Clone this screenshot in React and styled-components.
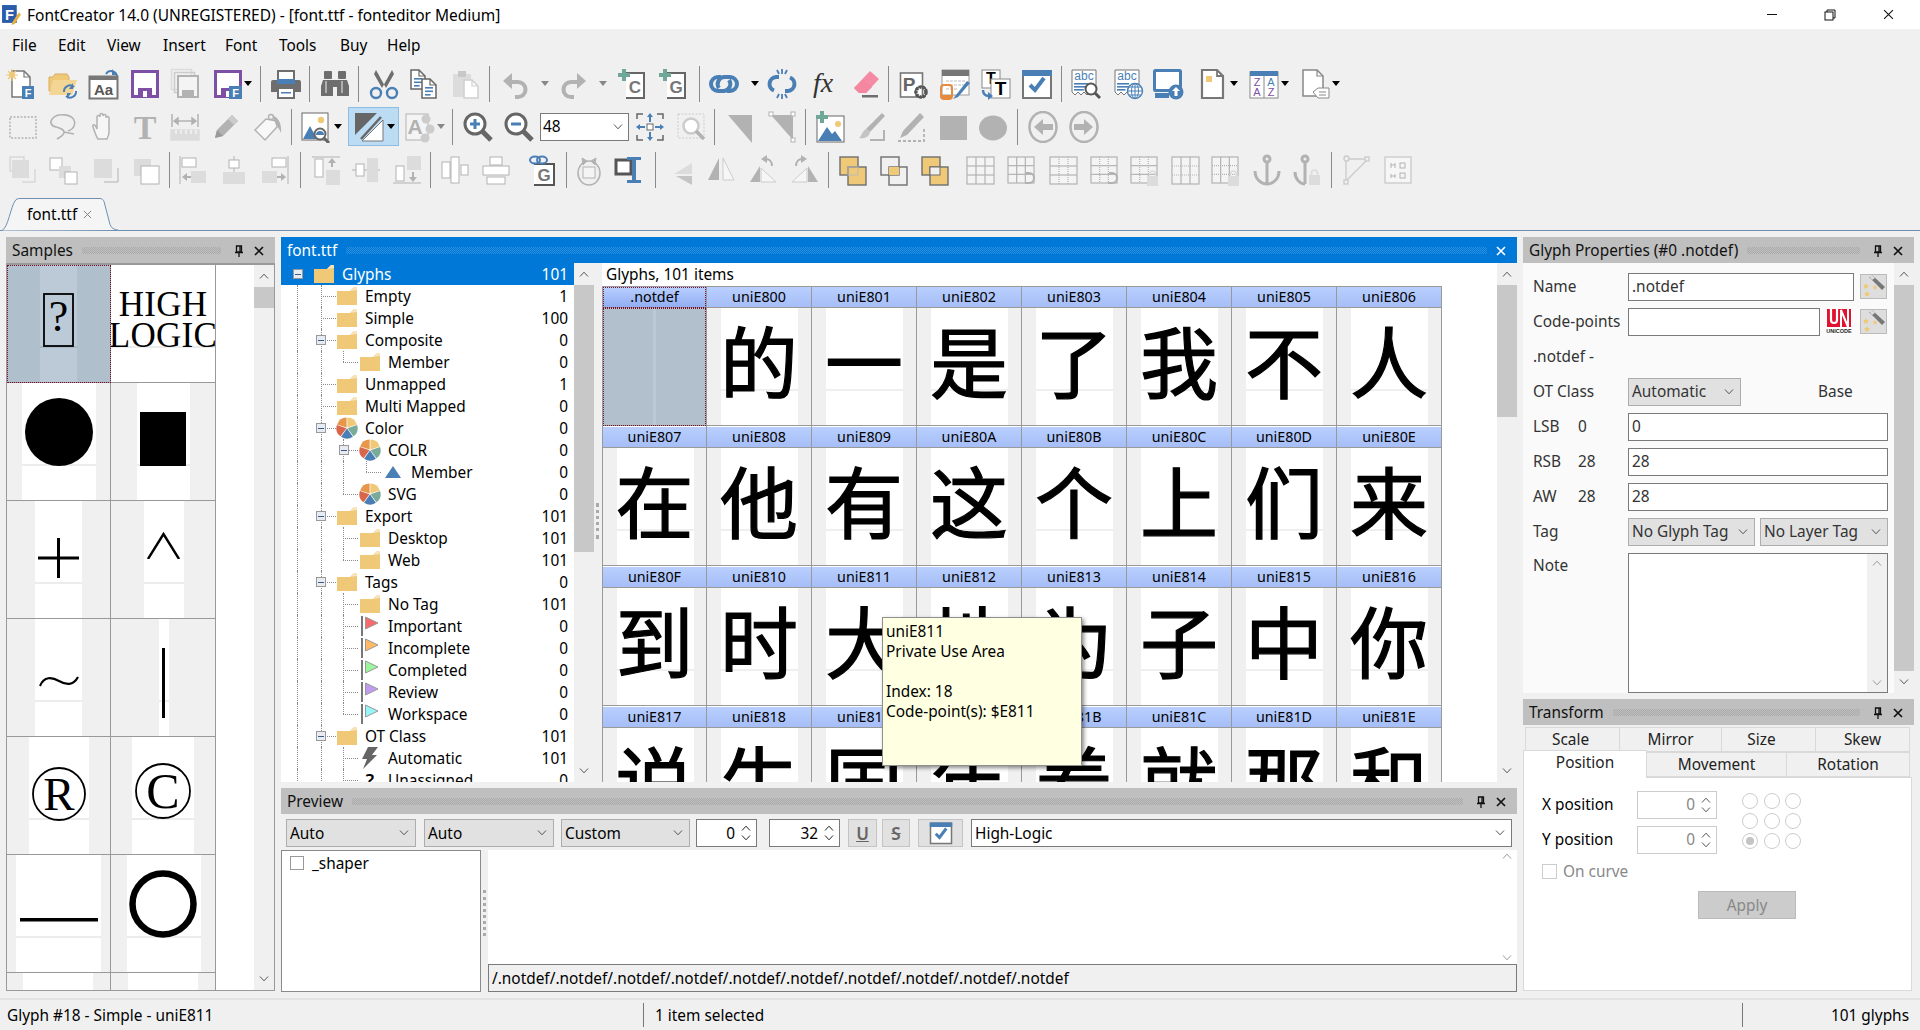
import React from "react";
import styled, { createGlobalStyle } from "styled-components";

const Global = createGlobalStyle`
  html, body { margin: 0; padding: 0; background: #f0f0f0; }
  * { box-sizing: border-box; }
  #root { width: 1920px; height: 1030px; overflow: hidden; }
`;

const SANS = `"Noto Sans", "Noto Sans CJK SC", sans-serif`;
const FS = "15.4px";
const B = "#4a7fb5", P = "#7d4fa5", D = "#6e6e6e", M = "#b2b2b2", L = "#dcdcdc", Y = "#efc878", G = "#6fa898";

const App_ = styled.div`
  width: 1920px; height: 1030px; background: #f0f0f0; display: flex; flex-direction: column;
  font-family: ${SANS}; font-size: ${FS}; color: #000; position: relative; overflow: hidden;
`;
const TitleBar = styled.div`
  height: 29px; background: #fff; display: flex; align-items: center; padding: 0 3px 0 2px; flex: none;
`;
const TitleText = styled.div`margin-left: 6px; font-size: 15.5px; flex: 1;`;
const WinBtn = styled.div`width: 58px; height: 29px; display: flex; align-items: center; justify-content: center;`;
const MenuBar = styled.div`height: 33px; display: flex; align-items: center; flex: none; padding-left: 12px; padding-bottom: 1px;`;
const MenuItem = styled.div`width: ${p => p.$w}px;`;
const ToolRow = styled.div`height: 43px; display: flex; align-items: center; flex: none;`;
const ToolSlot = styled.div`
  flex: none; width: ${p => p.$w}px; margin-left: ${p => p.$ml}px; display: flex; align-items: center; justify-content: center;
`;
const Sep = styled.div`width: 1px; height: 36px; background: #8a8a8a;`;
const Caret = styled.div`width: 0; height: 0; border-left: 4px solid transparent; border-right: 4px solid transparent; border-top: 5px solid ${p => p.$c || "#000"};`;
const Stripe = styled.div`
  width: 51px; height: 39px; background: #bcdcf4; border: 1px solid #8fbde4; display: flex; align-items: center; padding-left: 4px; gap: 2px;
`;
const ZoomCombo = styled.div`
  width: 89px; height: 28px; background: #fff; border: 1px solid #7a7a7a; display: flex; align-items: center; justify-content: space-between; padding: 0 5px 0 2px;
`;
const TabBar = styled.div`height: 40px; flex: none; border-bottom: 1px solid #6f8fb2; display: flex; align-items: flex-end; padding-left: 2px;`;
const DocTab = styled.div`
  position: relative; width: 116px; height: 33px; margin-bottom: -1px; display: flex; align-items: center; padding-left: 25px; gap: 6px;
`;
const TabShape = styled.svg`position: absolute; left: 0; top: 0; z-index: 0;`;
const TabLabel = styled.span`position: relative;`;
const Workspace = styled.div`height: 767px; flex: none; display: flex; gap: 6px; padding: 6px 0 0 6px;`;
const Panel = styled.div`width: ${p => p.$w}px; height: ${p => p.$h ? p.$h + "px" : "auto"}; display: flex; flex-direction: column; flex: none; overflow: hidden;`;
const Column = styled.div`display: flex; flex-direction: column; gap: 6px; flex: none; width: ${p => p.$w}px;`;
const PanelHead = styled.div`
  height: 26px; flex: none; background: ${p => p.$on ? "#0078d7" : "#bfbfbf"}; color: ${p => p.$on ? "#fff" : "#111"};
  display: flex; align-items: center; padding: 1px 6px 0 6px;
`;
const Grip = styled.div`
  flex: 1; height: 7px; margin: 0 ${p => p.$r || 8}px 0 9px;
  background: conic-gradient(${p => p.$on ? "#2b8fdf" : "#aaa"} 25%, transparent 0 50%, ${p => p.$on ? "#2b8fdf" : "#aaa"} 0 75%, transparent 0) 0 0 / 2px 2px;
`;
const HeadBtn = styled.div`width: 20px; display: flex; justify-content: center; align-items: center;`;

/* samples */
const SamplesBody = styled.div`height: 728px; display: flex; border: 1px solid #999; border-top-width: 2px; background: #fff; overflow: hidden;`;
const SampleGrid = styled.div`width: 209px; display: grid; grid-template-columns: 104px 105px; grid-auto-rows: 118px; align-content: start; flex: none;`;
const SampleCell = styled.div`
  position: relative; display: flex; align-items: center; justify-content: center; overflow: hidden;
  border-right: 1px solid #999; border-bottom: 1px solid #999; padding-bottom: ${p => p.$pb || 0}px; padding-top: ${p => p.$pt || 0}px;
  font-family: "Liberation Serif", serif;
  background:
    linear-gradient(to right, ${p => p.$sel ? "#b0bfcc" : "#f0f0f0"} ${p => p.$l}px, transparent ${p => p.$l}px, transparent calc(100% - ${p => p.$r}px), ${p => p.$sel ? "#b0bfcc" : "#f0f0f0"} calc(100% - ${p => p.$r}px)),
    linear-gradient(transparent 81px, ${p => p.$sel ? "#a8b7c5" : "#ececec"} 81px, ${p => p.$sel ? "#a8b7c5" : "#ececec"} 83px, transparent 83px),
    ${p => p.$sel ? "#bccad8" : "#fff"};
  ${p => p.$sel ? "outline: 1px dotted #7a1030; outline-offset: -1px;" : ""}
`;
const SampleSpacer = styled.div`width: 38px; flex: none;`;
const VScroll = styled.div`
  width: ${p => p.$w || 20}px; flex: none; background: ${p => p.$bg || "#f0f0f0"}; display: flex; flex-direction: column; align-items: center;
`;
const ScrollArrow = styled.div`height: 22px; flex: none; width: 100%; display: flex; align-items: center; justify-content: center; background: ${p => p.$bg || "transparent"};`;
const Thumb = styled.div`height: ${p => p.$h}px; width: 100%; flex: none; background: #c8c8c8;`;
const Fill = styled.div`flex: 1;`;
const HighLogic = styled.div`font-size: 35px; line-height: 31px; text-align: center; letter-spacing: 0.3px; white-space: nowrap; padding-bottom: 7px;`;

/* main */
const MainBody = styled.div`height: 519px; display: flex; background: #fff; overflow: hidden;`;
const Tree = styled.div`width: 293px; flex: none; overflow: hidden;`;
const TreeRow = styled.div`
  position: relative; height: 22px; display: flex; align-items: center; padding-left: ${p => p.$pl}px; padding-right: 6px;
  background: ${p => p.$sel ? "#0078d7" : "transparent"}; color: ${p => p.$sel ? "#fff" : "#000"};
`;
const TreeIcon = styled.div`width: 22px; height: 22px; flex: none; display: flex; align-items: center; justify-content: center; margin-right: 7px;`;
const TreeLabel = styled.span`flex: 1; white-space: nowrap;`;
const Count = styled.span`text-align: right;`;
const VGuide = styled.div`position: absolute; left: ${p => p.$x}px; top: 0; height: ${p => p.$half ? 11 : 22}px; border-left: 1px dotted #8a8a8a;`;
const HGuide = styled.div`position: absolute; left: ${p => p.$x}px; top: 11px; width: ${p => p.$w}px; border-top: 1px dotted #8a8a8a;`;
const Expander = styled.div`
  position: absolute; left: ${p => p.$x}px; top: 6px; width: 10px; height: 10px; background: #e8ecf2; border: 1px solid #999;
  display: flex; align-items: center; justify-content: center;
  &::after { content: ""; width: 6px; height: 1px; background: #3a5a8a; }
`;
const Splitter = styled.div`width: ${p => p.$w || 8}px; flex: none; background: #f0f0f0; position: relative;`;
const SplitGrip = styled.div`position: absolute; left: ${p => p.$x || 2}px; top: ${p => p.$t}px; height: ${p => p.$h}px; border-left: 3px dotted #aaa;`;
const GridPane = styled.div`flex: 1; display: flex; flex-direction: column; overflow: hidden; background: #fff;`;
const Caption = styled.div`height: 23px; padding-left: 4px; display: flex; align-items: center; flex: none;`;
const GlyphGrid = styled.div`display: grid; grid-template-columns: 104px repeat(7, 105px); grid-auto-rows: 140px; border-top: 1px solid #999; border-right: 1px solid #999; width: 840px;`;
const GlyphCell = styled.div`display: flex; flex-direction: column; border-left: 1px solid #999;`;
const GlyphHead = styled.div`
  height: 21px; flex: none; border-bottom: 1px solid #999; display: flex; align-items: center; justify-content: center; font-size: 14.3px; padding-bottom: 1px;
  background: linear-gradient(${p => p.$sel ? "#b9cfff, #92aef2" : "#b9cfff, #a6bef7"});
  ${p => p.$sel ? "outline: 1px dotted #7a1030; outline-offset: -1px;" : ""}
`;
const GlyphBody = styled.div`
  height: 118px; flex: none; border-bottom: 1px solid #999; display: flex; align-items: center; justify-content: center; padding-bottom: 15px;
  font-family: "Noto Sans CJK SC", sans-serif; font-size: 78px; line-height: 78px; -webkit-text-stroke: 1.2px #000; overflow: hidden;
  background:
    linear-gradient(to right, ${p => p.$sel ? "#b2c0cd" : "#f0f0f0"} 14px, ${p => p.$sel ? "#b2c0cd" : "transparent"} 14px, ${p => p.$sel ? "#b2c0cd" : "transparent"} 50px, ${p => p.$sel ? "#bccad8" : "transparent"} 50px, ${p => p.$sel ? "#bccad8" : "transparent"} 53px, ${p => p.$sel ? "#b2c0cd" : "transparent"} 53px, ${p => p.$sel ? "#b2c0cd" : "transparent"} 91px, ${p => p.$sel ? "#b2c0cd" : "#f0f0f0"} 91px),
    linear-gradient(transparent 81px, ${p => p.$sel ? "#a8b7c5" : "#efefef"} 81px, ${p => p.$sel ? "#a8b7c5" : "#efefef"} 83px, transparent 83px),
    #fff;
  ${p => p.$sel ? "outline: 1px dotted #7a1030; outline-offset: -1px;" : ""}
`;
const Tooltip = styled.div`
  position: absolute; left: 882px; top: 617px; width: 200px; height: 149px; background: #ffffe1; border: 1px solid #8f8f8f;
  box-shadow: 2px 2px 4px rgba(0,0,0,.45); padding: 4px 3px; line-height: 20px; z-index: 5; white-space: pre;
`;

/* preview */
const PreviewBar = styled.div`height: 36px; display: flex; align-items: center; padding: 2px 5px 0; background: #f0f0f0; flex: none;`;
const Combo = styled.div`
  flex: none; width: ${p => p.$w}px; height: ${p => p.$h || 28}px; margin-left: ${p => p.$ml || 0}px; background: ${p => p.$white ? "#fff" : "#e1e1e1"};
  border: 1px solid ${p => p.$white ? "#7a7a7a" : "#adadad"}; display: flex; align-items: center; justify-content: space-between; padding: 0 6px 0 3px; white-space: nowrap;
`;
const Spin = styled.div`
  flex: none; width: ${p => p.$w}px; height: ${p => p.$h || 28}px; margin-left: ${p => p.$ml || 0}px; background: #fff; border: 1px solid ${p => p.$pale ? "#ccc" : "#7a7a7a"};
  display: flex; align-items: center; justify-content: flex-end; padding-right: 5px; gap: 6px; color: ${p => p.$pale ? "#888" : "#000"};
`;
const SpinArrows = styled.div`display: flex; flex-direction: column; gap: 4px;`;
const ToggleBtn = styled.div`
  flex: none; width: ${p => p.$w}px; height: 28px; margin-left: ${p => p.$ml}px; background: #e1e1e1; border: 1px solid #c4c4c4; display: flex; align-items: center; justify-content: center;
  font-size: 17px; color: #666; font-weight: 600;
`;
const PreviewBody = styled.div`height: 142px; display: flex; background: #fff; flex: none;`;
const LayerList = styled.div`width: 200px; flex: none; border: 1px solid #8a8a8a; padding: 2px 0 0 8px; display: flex; gap: 8px; align-items: flex-start; background: #fff; height: 142px;`;
const CheckBox = styled.div`width: ${p => p.$s || 14}px; height: ${p => p.$s || 14}px; flex: none; border: 1px solid ${p => p.$c || "#999"}; background: #fff; margin-top: ${p => p.$mt ?? 3}px;`;
const PreviewMain = styled.div`flex: 1; display: flex; flex-direction: column; height: 142px;`;
const PreviewCanvas = styled.div`flex: 1; display: flex; justify-content: flex-end;`;
const PreviewScroll = styled.div`width: 20px; display: flex; flex-direction: column; align-items: center; padding: 3px 0; justify-content: space-between;`;
const TextInput = styled.div`
  height: ${p => p.$h || 28}px; background: ${p => p.$bg || "#fff"}; border: 1px solid #7a7a7a; display: flex; align-items: center; padding-left: 3px; white-space: nowrap; overflow: hidden;
  width: ${p => p.$w ? p.$w + "px" : "auto"}; flex: ${p => p.$w ? "none" : "initial"}; margin-left: ${p => p.$ml || 0}px;
`;

/* properties */
const PropsBody = styled.div`height: 430px; display: flex; background: #fafafa; overflow: hidden;`;
const PropsForm = styled.div`flex: 1; padding: 6px 6px 0 10px; display: flex; flex-direction: column; color: #333;`;
const PropRow = styled.div`height: ${p => p.$h || 35}px; display: flex; align-items: ${p => p.$top ? "flex-start" : "center"}; flex: none; margin-top: ${p => p.$mt || 0}px;`;
const PropLabel = styled.div`width: 95px; flex: none; white-space: nowrap; ${p => p.$top ? "padding-top: 2px;" : ""}`;
const Short = styled.span`display: inline-block; width: 45px; margin-left: ${p => p.$ml || 0}px;`;
const WandBtn = styled.div`width: 27px; height: 25px; flex: none; background: #dedede; border: 1px solid #bbb; margin-left: ${p => p.$ml || 6}px;`;
const NoteBox = styled.div`width: 260px; height: 140px; border: 1px solid #7a7a7a; background: #fff; display: flex; justify-content: flex-end;`;
const NoteScroll = styled.div`width: 20px; background: #f0f0f0; display: flex; flex-direction: column; justify-content: space-between; align-items: center; padding: 6px 0;`;

/* transform */
const TabsWrap = styled.div`height: 52px; position: relative; flex: none; padding: 2px 4px 0 2px;`;
const TabLine = styled.div`display: flex; height: 25px; margin-left: ${p => p.$ml || 0}px;`;
const PageTab = styled.div`
  width: ${p => p.$w}px; flex: none; background: ${p => p.$on ? "#fff" : "#f0f0f0"}; border: 1px solid #d9d9d9; border-left-width: ${p => p.$first ? 1 : 0}px;
  display: flex; justify-content: center; align-items: ${p => p.$on ? "flex-start" : "center"}; color: #222; position: relative; padding-right: ${p => p.$pr || 0}px;
  ${p => p.$on ? "margin-top: -2px; height: 28px; border-bottom: 0; z-index: 1; padding-top: 1px;" : ""}
`;
const TransformBody = styled.div`height: 214px; width: 389px; background: #fff; border: 1px solid #d9d9d9; padding: 9px 0 0 18px; display: flex; flex-direction: column;`;
const TRow = styled.div`height: 35px; display: flex; align-items: center; flex: none;`;
const TLabel = styled.div`width: 95px; flex: none;`;
const TTop = styled.div`position: relative;`;
const RadioGrid = styled.div`position: absolute; left: 200px; top: 6px; display: grid; grid-template-columns: repeat(3, 16px); column-gap: 5.5px; row-gap: 4px;`;
const Radio = styled.div`
  width: 16px; height: 16px; border-radius: 50%; border: 1px solid #ccc; background: #fff; display: flex; align-items: center; justify-content: center;
  &::after { content: ""; width: 8px; height: 8px; border-radius: 50%; background: ${p => p.$on ? "#c4c4c4" : "transparent"}; }
`;
const CurveRow = styled.div`display: flex; align-items: center; gap: 6px; color: #888; height: 22px; margin-top: 3px; flex: none;`;
const ApplyBtn = styled.div`
  width: 98px; height: 28px; margin: 9px 0 0 156px; background: #ccc; border: 1px solid #bbb; color: #888; display: flex; align-items: center; justify-content: center;
`;
const StatusBar = styled.div`height: 32px; flex: none; border-top: 2px solid #e2e2e2; display: flex; align-items: center;`;
const StatusCell = styled.div`
  width: ${p => p.$w}px; flex: ${p => p.$grow ? 1 : "none"}; height: 24px; display: flex; align-items: center; padding-left: ${p => p.$pl}px;
  border-left: ${p => p.$div ? "1px solid #777" : "0"}; justify-content: ${p => p.$right ? "flex-end" : "flex-start"}; padding-right: ${p => p.$right ? 11 : 0}px;
`;

/* icons */
const Svg = ({ s = 32, w, h, vb, children }) => <svg width={w || s} height={h || s} viewBox={vb || "0 0 32 32"} style={{ display: "block", flex: "none" }}>{children}</svg>;
const Chev = ({ up, c = "#555", w = 10, sw = 1 }) => (
  <svg width={w} height={w * 0.6} viewBox="0 0 10 6" style={{ display: "block", flex: "none" }}><path d={up ? "M1 5.500 5 1.200l4 4.300" : "M1 .5l4 4.300L9 .5"} fill="none" stroke={c} strokeWidth={sw} /></svg>
);
const txt = (x, y, t, size, fill, extra = {}) => <text x={x} y={y} fontSize={size} fill={fill} textAnchor="middle" fontFamily='"Liberation Sans", sans-serif' {...extra}>{t}</text>;
const Floppy = ({ c }) => <g><rect x="3.500" y="3.500" width="25" height="25" fill="#fff" stroke={c} strokeWidth="3" /><rect x="9" y="20" width="14" height="9" fill={c} /><rect x="14" y="23" width="4" height="6" fill="#fff" /></g>;
const Doc = ({ x = 6, y = 3, w = 20, h = 26, c = "#777", fill = "#fff", sw = 1.500 }) => <g><path d={`M${x} ${y}h${w - 6}l6 6v${h - 6}h-${w}z`} fill={fill} stroke={c} strokeWidth={sw} /><path d={`M${x + w - 6} ${y}v6h6`} fill="none" stroke={c} strokeWidth={sw * .8} /></g>;
const Lines = ({ x, y, w, n = 3, c = B, gap = 3.500 }) => <g>{Array.from({ length: n }, (_, i) => <rect key={i} x={x} y={y + i * gap} width={i === n - 1 ? w * .7 : w} height="1.600" fill={c} />)}</g>;
const Plus = ({ x, y, c = G }) => <path d={`M${x - 2} ${y - 6}h4v4h4v4h-4v4h-4v-4h-4v-4h4z`} fill={c} />;
const TableG = ({ c = M, dot, x = 3, y = 4, w = 24, h = 24, cols = 3, rows = 3 }) => (
  <g fill="none" stroke={c} strokeWidth="1.200">
    <rect x={x} y={y} width={w} height={h} fill="#f4f4f4" />
    {Array.from({ length: cols - 1 }, (_, i) => <path key={i} d={`M${x + w * (i + 1) / cols} ${y}v${h}`} strokeDasharray={dot === "v" ? "1 1" : undefined} />)}
    {Array.from({ length: rows - 1 }, (_, i) => <path key={i} d={`M${x} ${y + h * (i + 1) / rows}h${w}`} strokeDasharray={dot === "h" ? "1 1" : undefined} />)}
  </g>
);
const Lock = ({ x = 19, y = 17 }) => <g fill={L}><rect x={x} y={y + 5} width="11" height="10" /><path d={`M${x + 2.500} ${y + 5}v-2a3 3 0 0 1 6 0v2`} fill="none" stroke={L} strokeWidth="1.600" /></g>;
const Hook = () => <path d="M21 19h3a5 5 0 0 1 0 10h-4" fill="none" stroke={M} strokeWidth="2" />;

const IC = {
  new: <g><Doc x={7} y={3} w={18} h={26} /><rect x="17" y="18" width="12" height="13" fill={B} />{txt(23, 29, "F", 11, "#fff", { fontWeight: 700 })}<circle cx="7" cy="7" r="3" fill={Y} /><path d="M7 1v12M1 7h12M3 3l8 8M11 3l-8 8" stroke={Y} strokeWidth="1.200" /></g>,
  open: <g><path d="M2 9h4l2-3h12l2 3v14H2z" fill={Y} stroke="#d8ad60" /><path d="M2 27 6 12h24l-5 15z" fill="#f3d596" /><path d="M17 24a6 6 0 0 1 10-5M29 23a6 6 0 0 1-10 5" fill="none" stroke={B} strokeWidth="2" /><path d="M26 15v6h-4zM20 31v-6h4z" fill={B} /></g>,
  aa: <g><rect x="1.500" y="8.500" width="28" height="22" fill="#fff" stroke="#777" strokeWidth="2" /><rect x="1" y="8" width="29" height="4" fill="#777" />{txt(15.500, 27, "Aa", 15, "#555", { fontWeight: 700 })}<path d="M18 6a6 6 0 0 1 11 2" fill="none" stroke={B} strokeWidth="2" /><path d="M24 1v6h5z" fill={B} /></g>,
  save: <Floppy c={P} />,
  saveall: <g fill="none"><rect x="2.500" y="1.500" width="20" height="20" stroke={L} strokeWidth="1.500" /><rect x="5.500" y="4.500" width="20" height="20" stroke="#ccc" strokeWidth="1.500" /><rect x="9" y="8" width="20" height="21" fill="#f4f4f4" stroke={M} strokeWidth="2" /><rect x="13" y="22" width="12" height="7" fill={M} /></g>,
  savef: <g><Floppy c={P} /><rect x="17" y="18" width="13" height="13" fill={B} />{txt(23.500, 29, "F", 11, "#fff", { fontWeight: 700 })}</g>,
  print: <g><rect x="8" y="3" width="16" height="10" fill="#fff" stroke={D} strokeWidth="2" /><path d="M3 12h26a2 2 0 0 1 2 2v10h-6v-4H7v4H1V14a2 2 0 0 1 2-2z" fill={D} /><rect x="7" y="11" width="18" height="5" fill={B} /><rect x="8" y="20" width="16" height="10" fill="#fff" stroke={D} strokeWidth="2" /><rect x="11" y="24" width="10" height="1.500" fill={B} /></g>,
  binoc: <g fill={D}><rect x="5" y="3" width="8" height="8" rx="1" /><rect x="19" y="3" width="8" height="8" rx="1" /><path d="M4 12h10v16H2V18zM18 12h10l2 6v10H18z" /><rect x="13" y="12" width="6" height="7" /><rect x="6" y="13" width="2" height="12" fill="#fff" opacity=".45" /><rect x="22" y="13" width="2" height="12" fill="#fff" opacity=".45" /></g>,
  cut: <g><path d="M8 2 18 20h-4L6 6zM24 2 14 20h4l8-14z" fill={D} /><circle cx="8" cy="25" r="5" fill="none" stroke={B} strokeWidth="2.400" /><circle cx="24" cy="25" r="5" fill="none" stroke={B} strokeWidth="2.400" /></g>,
  copy: <g><Doc x={3} y={2} w={14} h={19} c="#666" /><Lines x={6} y={10} w={8} n={3} c={B} /><Doc x={14} y={11} w={14} h={19} c="#666" /><Lines x={17} y={19} w={8} n={3} c={B} /></g>,
  paste: <g><rect x="3" y="6" width="18" height="23" fill={L} /><rect x="8" y="3" width="8" height="6" fill="#c8c8c8" /><Doc x={14} y={12} w={14} h={18} c="#cfcfcf" /></g>,
  undo: <path d="M13 5 4 13l9 8v-5h6a5 5 0 0 1 0 11h-3v4h3a9 9 0 0 0 0-19h-6z" fill={M} />,
  redo: <path d="M19 5l9 8-9 8v-5h-6a5 5 0 0 0 0 11h3v4h-3a9 9 0 0 1 0-19h6z" fill={M} />,
  addc: <g><path d="M9 5h18v25H9" fill="#fff" stroke="#666" strokeWidth="2" />{txt(18, 25, "C", 17, "#777", { fontWeight: 700 })}<Plus x={7} y={7} /></g>,
  addg: <g><path d="M9 5h18v25H9" fill="#fff" stroke="#666" strokeWidth="2" />{txt(18, 25, "G", 17, "#777", { fontWeight: 700 })}<Plus x={7} y={7} /></g>,
  link: <g fill="none" stroke={B} strokeWidth="4"><path d="M13 9H10a7 7 0 0 0 0 14h6a7 7 0 0 0 5-11" /><path d="M19 23h3a7 7 0 0 0 0-14h-6a7 7 0 0 0-5 11" /></g>,
  unlink: <g fill="none" stroke={B}><path d="M13 9H10a7 7 0 0 0-2 13.500M19 23h3a7 7 0 0 0 2-13.500" strokeWidth="4" /><path d="M16 1v5M11 2l2 4M21 2l-2 4M16 31v-5M11 30l2-4M21 30l-2-4" strokeWidth="1.800" /></g>,
  fx: <text x="15" y="24" fontFamily='"Liberation Serif", serif' fontStyle="italic" fontSize="28" fill="#333" textAnchor="middle">fx</text>,
  eraser: <g><path d="M20 3l9 8-13 14H9l-5-5z" fill="#f58aa4" /><path d="M4 20l9-8 9 7-6 6H9z" fill="#f4879f" /><rect x="12" y="27" width="16" height="2.500" fill={D} /></g>,
  pgear: <g><rect x="2.500" y="5" width="22" height="24" fill="#fff" stroke="#777" strokeWidth="1.600" />{txt(11, 23, "P", 19, "#666", { fontWeight: 700 })}<circle cx="23" cy="24" r="5" fill="none" stroke="#555" strokeWidth="3.500" strokeDasharray="2.500 1" /><circle cx="23" cy="24" r="5.500" fill="none" stroke="#555" strokeWidth="1.500" /></g>,
  tablepen: <g><rect x="3" y="2" width="27" height="25" fill="#fff" stroke="#999" /><rect x="3" y="2" width="27" height="6" fill="#777" /><path d="M7 13h20M7 17h20M7 21h12" stroke="#bbb" strokeDasharray="3 1" /><rect x="2" y="17" width="11" height="14" rx="3" fill="none" stroke="#e88a3c" strokeWidth="2" /><rect x="2" y="27" width="11" height="4" fill="#e88a3c" /><path d="M28 13 17 27l-3 4 5-2 12-14z" fill={B} /></g>,
  tt: <g><rect x="2" y="2" width="18" height="18" fill="#fff" stroke="#888" />{txt(11, 16, "T", 16, "#000", { fontWeight: 700 })}<rect x="11" y="11" width="19" height="19" fill="#fff" stroke="#888" />{txt(20.500, 27, "T", 19, "#000", { fontWeight: 700 })}<path d="M3 22c0 4 2 6 6 6" fill="none" stroke={B} strokeWidth="2.400" /><path d="M8 24v8l5-4z" fill={B} /></g>,
  check: <g><rect x="2" y="3" width="28" height="27" fill="#fff" stroke="#777" strokeWidth="2" /><rect x="1" y="2" width="30" height="6" fill={B} /><path d="M9 17l5 5 9-12" fill="none" stroke={B} strokeWidth="4" /></g>,
  abcfind: <g><path d="M3 2h24v22l-3 3-3-3-3 3-3-3-3 3-3-3-3 3-3-3z" fill="#fff" stroke="#777" />{txt(15, 12, "abc", 12, B)}<Lines x={5} y={15} w={14} n={3} c={B} gap={3} /><circle cx="22" cy="21" r="5.500" fill="#fff" stroke="#555" strokeWidth="2" /><path d="M26 25l5 5" stroke="#555" strokeWidth="3" /></g>,
  abcglobe: <g><path d="M3 2h24v22l-3 3-3-3-3 3-3-3-3 3-3-3-3 3-3-3z" fill="#fff" stroke="#777" />{txt(15, 12, "abc", 12, B)}<Lines x={5} y={15} w={12} n={3} c={B} gap={3} /><circle cx="23" cy="23" r="7.500" fill="#fff" stroke={B} strokeWidth="1.400" /><path d="M15.500 23h15M23 15.500v15M17 19h12M17 27h12" stroke={B} /><ellipse cx="23" cy="23" rx="3.500" ry="7.500" fill="none" stroke={B} /></g>,
  upload: <g><rect x="2.500" y="2.500" width="26" height="20" rx="1" fill="#fff" stroke={B} strokeWidth="3" /><rect x="3" y="25" width="14" height="5" fill={B} /><circle cx="24" cy="24" r="7.500" fill={B} /><path d="M24 19l-4 4h2.500v5h3v-5H28z" fill="#fff" /></g>,
  docf: <g><Doc x={6} y={2} w={21} h={28} c="#777" sw={2.200} /><rect x="10" y="8" width="6" height="6" fill={Y} /></g>,
  az: <g><rect x="2" y="4" width="28" height="26" fill="#fff" stroke="#888" /><rect x="2" y="3" width="28" height="5" fill={B} /><path d="M16 8v22" stroke="#888" />{txt(9, 18, "Z", 11, P)}{txt(9, 28, "A", 11, P)}{txt(23, 18, "A", 11, B)}{txt(23, 28, "Z", 11, P)}</g>,
  doctag: <g><Doc x={4} y={2} w={20} h={26} c="#888" /><path d="M14 24l5-4h11v10H19z" fill="#fff" stroke="#888" /><path d="M20 24h7M20 27h7" stroke="#888" /></g>,
  marquee: <rect x="3" y="6" width="26" height="21" fill="none" stroke={M} strokeWidth="1.500" strokeDasharray="2 1.500" />,
  lasso: <path d="M22 20c6-2 8-7 6-11-3-6-16-7-21-2-4 4-2 8 3 9 4 1 9 3 8 6s-4 4-7 6M18 21l10 2" fill="none" stroke={M} strokeWidth="1.600" />,
  hand: <path d="M10 28c-2-3-4-9-5-12s2-3 3 0l1 2V6c0-2 3-2 3 0v-2c0-2 3-2 3 0v1c0-2 3-2 3 0v2c0-2 3-2 3 0v14c0 3-1 5-2 7z" fill="#f6f6f6" stroke={M} strokeWidth="1.500" />,
  T: <text x="16" y="28" fontFamily='"Liberation Serif", serif' fontWeight="700" fontSize="34" fill={M} textAnchor="middle">T</text>,
  ruler: <g stroke={M} fill="none" strokeWidth="1.500"><path d="M3 3v13M29 3v13M5 10h22" /><path d="M5 10l4-3v6zM27 10l-4-3v6z" fill={M} /><rect x="2" y="19" width="28" height="10" fill={L} stroke={L} /><path d="M7 19v4M12 19v4M17 19v4M22 19v4M27 19v4" stroke="#f4f4f4" /></g>,
  knife: <g><path d="M22 4l6 6-15 15-8 2 2-8z" fill={M} /><path d="M22 4l6 6-4 4-6-6z" fill="#ccc" /><path d="M5 27l2-8 6 6z" fill="#9a9a9a" /></g>,
  tagfill: <g><path d="M14 8 3 19l10 10 12-13v-6z" fill="#f8f8f8" stroke={M} strokeWidth="1.500" /><path d="M20 4c6 2 10 8 9 18-2-5-4-7-5-8z" fill={M} /><circle cx="19" cy="6" r="2.500" fill="none" stroke={M} strokeWidth="1.300" /></g>,
  imgfind: <g><rect x="2" y="2" width="26" height="27" fill="#fff" stroke="#666" /><circle cx="21" cy="9" r="3.200" fill={Y} /><path d="M3 28 10 15l7 13z" fill={B} /><circle cx="20" cy="23" r="5.500" fill="#fff" stroke="#666" strokeWidth="2" /><path d="M16 24a4 4 0 0 1 8 0z" fill={B} /><path d="M24 27l5 5" stroke="#666" strokeWidth="3" /></g>,
  stripes: <g><path d="M2 2h22L2 24z" fill="#666" /><path d="M28 6 8 28" stroke="#666" strokeWidth="2.500" /><path d="M30 9v21H9z" fill="#fff" stroke="#777" /></g>,
  aopts: <g><rect x="2" y="3" width="22" height="26" fill="#f4f4f4" stroke={M} />{txt(11, 23, "A", 21, M, { fontWeight: 700 })}<circle cx="22" cy="8" r="4.500" fill="#ccc" /><circle cx="26" cy="18" r="4.500" fill="#ccc" /><circle cx="21" cy="27" r="4.500" fill="#ccc" /></g>,
  zoomin: <g><circle cx="13" cy="13" r="10" fill="#fff" stroke="#666" strokeWidth="3" /><path d="M20 20l9 9" stroke="#666" strokeWidth="5" /><path d="M13 8v10M8 13h10" stroke={B} strokeWidth="3" /></g>,
  zoomout: <g><circle cx="13" cy="13" r="10" fill="#fff" stroke="#666" strokeWidth="3" /><path d="M20 20l9 9" stroke="#666" strokeWidth="5" /><path d="M8 13h10" stroke={B} strokeWidth="3" /></g>,
  fit: <g><path d="M3 8V3h6M23 3h6v5M3 24v5h6M23 29h6v-5" fill="none" stroke="#666" strokeWidth="1.500" /><rect x="13" y="13" width="6" height="6" fill="#fff" stroke="#666" /><path d="M16 2l-3 4h2v5h2V6h2zM16 30l-3-4h2v-5h2v5h2zM2 16l4-3v2h5v2H6v2zM30 16l-4-3v2h-5v2h5v2z" fill={B} /></g>,
  zoomsel: <g><rect x="2" y="3" width="26" height="24" fill="none" stroke="#ccc" strokeDasharray="2 1.500" /><circle cx="15" cy="15" r="7.500" fill="#fff" stroke="#ccc" strokeWidth="2.500" /><path d="M20 20l8 8" stroke={M} strokeWidth="3.500" /></g>,
  tri1: <path d="M4 4h24v28z" fill={M} />,
  tri2: <g><path d="M5 4h22v25z" fill={M} /><rect x="3" y="1" width="4" height="4" fill="#fff" stroke={M} /><rect x="25" y="1" width="4" height="4" fill="#fff" stroke={M} /><rect x="25" y="27" width="4" height="4" fill="#fff" stroke={M} /></g>,
  imgadd: <g><rect x="3" y="5" width="27" height="26" fill="#fff" stroke="#666" /><circle cx="24" cy="13" r="3" fill={Y} /><path d="M4 30 13 16l5 7 3-3 7 10z" fill={B} /><Plus x={8} y={6} /></g>,
  brush: <g><path d="M28 2l3 3-15 16-4-3z" fill={M} /><path d="M12 18l4 3c-1 5-5 7-11 6 3-2 3-7 7-9z" fill="#c4c4c4" /><path d="M16 29h14V19" fill="none" stroke={M} strokeWidth="2" /></g>,
  pen: <g><path d="M26 2l4 4-17 18-7 3 3-7z" fill={M} /><path d="M4 30h26V16" fill="none" stroke={M} strokeWidth="1.800" strokeDasharray="3 2" /></g>,
  rect: <rect x="3" y="5" width="27" height="24" fill={M} />,
  ell: <ellipse cx="16" cy="17" rx="14" ry="12.500" fill={M} />,
  back: <g><ellipse cx="16" cy="16" rx="13.500" ry="15" fill="none" stroke={M} strokeWidth="2.500" /><path d="M7 16l9-8v5h10v6H16v5z" fill={M} /></g>,
  fwd: <g><ellipse cx="16" cy="16" rx="13.500" ry="15" fill="none" stroke={M} strokeWidth="2.500" /><path d="M25 16l-9-8v5H6v6h10v5z" fill={M} /></g>,
  ord1: <g><rect x="4" y="3" width="14" height="14" fill="none" stroke="#ccc" /><rect x="6" y="6" width="17" height="18" fill={L} /><path d="M16 28h13V15" fill="none" stroke="#ccc" /></g>,
  ord2: <g><rect x="3" y="4" width="12" height="12" fill="#fff" stroke={M} /><rect x="12" y="12" width="12" height="12" fill={L} /><rect x="18" y="18" width="12" height="12" fill="#fff" stroke={M} /></g>,
  ord3: <g><rect x="4" y="5" width="18" height="19" fill={L} /><path d="M14 28h14V14" fill="none" stroke={M} /></g>,
  ord4: <g><rect x="3" y="5" width="17" height="17" fill={L} /><rect x="10" y="12" width="18" height="18" fill="#fff" stroke={M} /></g>,
  alignL: <g><path d="M3 2v28" stroke={M} /><rect x="5" y="4" width="14" height="9" fill="#fff" stroke={M} /><rect x="14" y="17" width="15" height="12" fill={L} /><path d="M5 23l5-4v3h4v2h-4v3z" fill={M} /></g>,
  alignC: <g><path d="M16 2v28" stroke={M} /><rect x="11" y="6" width="10" height="8" fill="#fff" stroke={M} /><rect x="5" y="18" width="22" height="12" fill={L} /></g>,
  alignR: <g><path d="M29 2v28" stroke={M} /><rect x="13" y="4" width="14" height="9" fill="#fff" stroke={M} /><rect x="3" y="17" width="15" height="12" fill={L} /><path d="M27 23l-5-4v3h-4v2h4v3z" fill={M} /></g>,
  alignT: <g><path d="M2 3h28" stroke={M} /><rect x="5" y="5" width="8" height="18" fill="#fff" stroke={M} /><rect x="16" y="16" width="14" height="15" fill={L} /><path d="M22 4l-4 5h3v4h2V9h3z" fill={M} /></g>,
  alignM: <g><path d="M2 16h28" stroke={M} /><rect x="6" y="10" width="8" height="12" fill="#fff" stroke={M} /><rect x="17" y="4" width="11" height="24" fill={L} /></g>,
  alignB: <g><path d="M2 29h28" stroke={M} /><rect x="5" y="12" width="8" height="15" fill="#fff" stroke={M} /><rect x="16" y="2" width="14" height="14" fill={L} /><path d="M22 28l-4-5h3v-5h2v5h3z" fill={M} /></g>,
  distH: <g fill="#fff" stroke={M}><rect x="3" y="8" width="8" height="16" /><rect x="12" y="3" width="8" height="26" /><rect x="22" y="11" width="7" height="10" /></g>,
  distV: <g fill="#fff" stroke={M}><rect x="10" y="3" width="12" height="8" /><rect x="3" y="12" width="26" height="9" /><rect x="7" y="23" width="18" height="7" /></g>,
  linkG: <g><path d="M8 10h20v21H8" fill="#fff" stroke="#555" strokeWidth="2" />{txt(18, 27, "G", 17, "#777", { fontWeight: 700 })}<g fill="none" stroke={B} strokeWidth="2"><ellipse cx="9" cy="6" rx="5" ry="3.500" /><ellipse cx="16" cy="6" rx="5" ry="3.500" /></g></g>,
  rot: <g fill="none" stroke={M}><ellipse cx="16" cy="19" rx="11" ry="12" strokeWidth="1.500" /><rect x="10" y="13" width="12" height="11" fill="#f4f4f4" /><path d="M9 4l5 3-4 4zM23 4l-5 3 4 4z" fill={M} /></g>,
  clamp: <g><rect x="3" y="6" width="15" height="14" fill="#fff" stroke="#555" strokeWidth="3" /><path d="M14 3h14v3h-5v20h5v3H14v-3h5V6h-5z" fill={B} /></g>,
  arrowT: <g><path d="M25 9v11L7 20z" fill={L} /><path d="M25 22v9L9 22z" fill="#c4c4c4" /></g>,
  mir: <g><path d="M14 4v22H3z" fill={M} /><path d="M18 4v22h11z" fill="#f6f6f6" stroke="#ccc" /></g>,
  rotL: <g><path d="M12 12v16H2z" fill={M} /><path d="M13 14l15 14H13z" fill="#f6f6f6" stroke="#ccc" /><path d="M24 12c0-5-3-7-6-7" fill="none" stroke={M} strokeWidth="2" /><path d="M19 1l-6 4 6 4z" fill={M} /></g>,
  rotR: <g><path d="M19 12v16h10z" fill={M} /><path d="M18 14 3 28h15z" fill="#f6f6f6" stroke="#ccc" /><path d="M7 12c0-5 3-7 6-7" fill="none" stroke={M} strokeWidth="2" /><path d="M12 1l6 4-6 4z" fill={M} /></g>,
  bool1: <g><rect x="3" y="3" width="18" height="18" fill={Y} stroke={D} strokeWidth="1.400" /><rect x="11" y="13" width="18" height="18" fill={Y} stroke={D} strokeWidth="1.400" /><rect x="11" y="13" width="10" height="8" fill="none" stroke="#bbb" /></g>,
  bool2: <g><rect x="3" y="3" width="18" height="18" fill="none" stroke={D} strokeWidth="1.400" /><rect x="11" y="13" width="18" height="18" fill="none" stroke={D} strokeWidth="1.400" /><rect x="11" y="13" width="10" height="8" fill={Y} /></g>,
  bool3: <g><rect x="3" y="3" width="18" height="18" fill={Y} stroke={D} strokeWidth="1.400" /><rect x="11" y="13" width="18" height="18" fill={Y} stroke={D} strokeWidth="1.400" /><rect x="11" y="13" width="10" height="8" fill="#f0f0f0" stroke={D} /></g>,
  grid1: <TableG w={27} h={27} x={3} y={3} />,
  gridU: <g><TableG w={26} h={26} x={3} y={3} /><Hook /></g>,
  grid2: <TableG w={27} h={27} x={3} y={3} dot="v" />,
  grid2U: <g><TableG w={26} h={26} x={3} y={3} dot="v" /><Hook /></g>,
  grid2L: <g><TableG w={26} h={26} x={3} y={3} dot="v" /><Lock /></g>,
  grid3: <TableG w={27} h={27} x={3} y={3} dot="h" />,
  grid3L: <g><TableG w={26} h={26} x={3} y={3} dot="h" /><Lock /></g>,
  anchor: <g fill="none" stroke={M} strokeWidth="3"><circle cx="16" cy="5" r="3" /><path d="M16 8v22M4 17c0 8 6 13 12 13s12-5 12-13" /></g>,
  anchorL: <g><g fill="none" stroke={M} strokeWidth="3"><circle cx="13" cy="5" r="3" /><path d="M13 8v22M3 18c0 7 5 12 10 12" /></g><Lock x={17} y={16} /></g>,
  node: <g fill="none" stroke="#ccc" strokeWidth="1.400"><rect x="3" y="2" width="5" height="5" rx="2.500" /><rect x="24" y="3" width="4" height="4" /><rect x="3" y="26" width="4" height="4" /><path d="M8 5h16M25 7 6 26M5 7v19" /></g>,
  points: <g><rect x="3" y="3" width="26" height="26" fill="#f6f6f6" stroke="#ccc" strokeWidth="1.400" /><path d="M9 9v5M13 9v5M9 20v4M13 20v4M9 11h4M9 22h4" stroke={M} /><rect x="18" y="9" width="5" height="5" fill="none" stroke={M} /><rect x="18" y="19" width="5" height="5" fill="none" stroke={M} /></g>,
};

const ROW1 = [[21, "new"], [63, "open"], [104, "aa"], [145, "save"], [185, "saveall"], [228, "savef"], [248, "v"], [260, "|"], [286, "print"], [309, "|"], [335, "binoc"], [358, "|"], [384, "cut"], [424, "copy"], [466, "paste"], [489, "|"], [515, "undo"], [545, "vg"], [574, "redo"], [603, "vg"], [633, "addc"], [674, "addg"], [699, "|"], [724, "link"], [755, "v"], [782, "unlink"], [824, "fx"], [866, "eraser"], [888, "|"], [914, "pgear"], [955, "tablepen"], [996, "tt"], [1037, "check"], [1061, "|"], [1085, "abcfind"], [1128, "abcglobe"], [1168, "upload"], [1212, "docf"], [1234, "v"], [1264, "az"], [1285, "v"], [1315, "doctag"], [1336, "v"]];
const ROW2 = [[23, "marquee"], [62, "lasso"], [104, "hand"], [145, "T"], [185, "ruler"], [226, "knife"], [268, "tagfill"], [291, "|"], [316, "imgfind"], [338, "v"], [373.5, "STRIPE"], [420, "aopts"], [441, "vg"], [452, "|"], [478, "zoomin"], [519, "zoomout"], [584.5, "COMBO"], [650, "fit"], [692, "zoomsel"], [714, "|"], [740, "tri1"], [782, "tri2"], [805, "|"], [830, "imgadd"], [870, "brush"], [910, "pen"], [953, "rect"], [993, "ell"], [1017, "|"], [1043, "back"], [1084, "fwd"]];
const ROW3 = [[22, "ord1"], [63, "ord2"], [106, "ord3"], [147, "ord4"], [169, "|"], [193, "alignL"], [234, "alignC"], [275, "alignR"], [300, "|"], [326, "alignT"], [366, "alignM"], [407, "alignB"], [430, "|"], [455, "distH"], [496, "distV"], [542, "linkG"], [566, "|"], [589, "rot"], [629, "clamp"], [655, "|"], [683, "arrowT"], [721, "mir"], [764, "rotL"], [805, "rotR"], [828, "|"], [853, "bool1"], [894, "bool2"], [935, "bool3"], [980, "grid1"], [1021, "gridU"], [1063, "grid2"], [1104, "grid2U"], [1144, "grid2L"], [1185, "grid3"], [1225, "grid3L"], [1267, "anchor"], [1308, "anchorL"], [1331, "|"], [1357, "node"], [1398, "points"]];

const WIDTH = { "|": 1, v: 8, vg: 8, STRIPE: 51, COMBO: 89 };
const Tools = ({ items }) => {
  let end = 0;
  return (
    <ToolRow>
      {items.map(([x, k], i) => {
        const w = WIDTH[k] || 32;
        const ml = x - w / 2 - end;
        end = x + w / 2;
        let body;
        if (k === "|") body = <Sep />;
        else if (k === "v") body = <Caret />;
        else if (k === "vg") body = <Caret $c="#888" />;
        else if (k === "STRIPE") body = <Stripe><Svg s={32}>{IC.stripes}</Svg><Caret /></Stripe>;
        else if (k === "COMBO") body = <ZoomCombo>48<Chev /></ZoomCombo>;
        else body = <Svg>{IC[k]}</Svg>;
        return <ToolSlot key={i} $w={w} $ml={ml}>{body}</ToolSlot>;
      })}
    </ToolRow>
  );
};

const Folder = () => <Svg w={20} h={18} vb="0 0 20 18"><path d="M0 4h13l4-4h3v18H0z" fill={Y} /><path d="M13 4l4-4h3v3z" fill="#f7e4bd" /></Svg>;
const wedge = (a0, a1, r, cx, cy, off) => {
  const rad = d => (d - 90) * Math.PI / 180;
  const m = rad((a0 + a1) / 2), ox = cx + Math.cos(m) * off, oy = cy + Math.sin(m) * off;
  const p = a => `${ox + Math.cos(rad(a)) * r} ${oy + Math.sin(rad(a)) * r}`;
  return `M${ox} ${oy}L${p(a0)}A${r} ${r} 0 0 1 ${p(a1)}z`;
};
const Pie = () => (
  <Svg s={22} vb="0 0 22 22">
    <path d={wedge(0, 72, 10, 11, 11, .6)} fill={Y} /><path d={wedge(72, 144, 10, 11, 11, .6)} fill="#7aaa9a" />
    <path d={wedge(144, 216, 10, 11, 11, .6)} fill={B} /><path d={wedge(216, 288, 10, 11, 11, .6)} fill="#d9654a" /><path d={wedge(288, 360, 10, 11, 11, .6)} fill="#e8964a" />
  </Svg>
);
const Flag = ({ c }) => <Svg w={18} h={20} vb="0 0 18 20"><rect x="0" y="0" width="2" height="20" fill="#777" /><path d="M4.500 1 17 7 4.500 13z" fill={c} stroke="#999" /></Svg>;
const QMark = styled.span`font-size: 18px; font-weight: 600; line-height: 1;`;
const TIcon = ({ k }) => {
  if (k === "f") return <Folder />;
  if (k === "p") return <Pie />;
  if (k === "t") return <Svg w={16} h={12} vb="0 0 16 12"><path d="M8 0l8 12H0z" fill={B} /></Svg>;
  if (k === "b") return <Svg w={18} h={22} vb="0 0 18 22"><path d="M7 0h10L11 8h5L2 22l4-10H1z" fill="#666" /></Svg>;
  if (k === "q") return <QMark>?</QMark>;
  return <Flag c={k} />;
};
const TREE = [
  [0, "f", "Glyphs", 101, 1, 1], [1, "f", "Empty", 1], [1, "f", "Simple", 100], [1, "f", "Composite", 0, 1], [2, "f", "Member", 0, 0, 0, 1],
  [1, "f", "Unmapped", 1], [1, "f", "Multi Mapped", 0], [1, "p", "Color", 0, 1], [2, "p", "COLR", 0, 1], [3, "t", "Member", 0, 0, 0, 1], [2, "p", "SVG", 0, 0, 0, 1],
  [1, "f", "Export", 101, 1], [2, "f", "Desktop", 101], [2, "f", "Web", 101, 0, 0, 1], [1, "f", "Tags", 0, 1], [2, "f", "No Tag", 101],
  [2, "#f96a6a", "Important", 0], [2, "#ffb864", "Incomplete", 0], [2, "#9cf59c", "Completed", 0], [2, "#c09cf0", "Review", 0], [2, "#98f4f8", "Workspace", 0, 0, 0, 1],
  [1, "f", "OT Class", 101, 1], [2, "b", "Automatic", 101], [2, "q", "Unassigned", 0],
];
const PL = [32, 55, 78, 101];
const TreeView = () => (
  <Tree>
    {TREE.map(([lvl, ic, name, n, exp, sel, last], i) => {
      const ex = [12, 35, 58];
      return (
        <TreeRow key={i} $pl={PL[lvl]} $sel={sel}>
          {i > 0 && <VGuide $x={16} />}
          {lvl >= 1 && <VGuide $x={40} />}
          {lvl === 1 && <HGuide $x={40} $w={15} />}
          {lvl === 2 && <VGuide $x={62} $half={last} />}
          {lvl === 2 && <HGuide $x={62} $w={15} />}
          {lvl === 3 && <><VGuide $x={62} /><VGuide $x={85} $half /><HGuide $x={85} $w={15} /></>}
          {exp ? <Expander $x={ex[lvl]} /> : null}
          <TreeIcon><TIcon k={ic} /></TreeIcon>
          <TreeLabel>{name}</TreeLabel>
          <Count>{n}</Count>
        </TreeRow>
      );
    })}
  </Tree>
);

const ROWS = [
  [".notdef", ""], ["uniE800", "的"], ["uniE801", "一"], ["uniE802", "是"], ["uniE803", "了"], ["uniE804", "我"], ["uniE805", "不"], ["uniE806", "人"],
  ["uniE807", "在"], ["uniE808", "他"], ["uniE809", "有"], ["uniE80A", "这"], ["uniE80B", "个"], ["uniE80C", "上"], ["uniE80D", "们"], ["uniE80E", "来"],
  ["uniE80F", "到"], ["uniE810", "时"], ["uniE811", "大"], ["uniE812", "地"], ["uniE813", "为"], ["uniE814", "子"], ["uniE815", "中"], ["uniE816", "你"],
  ["uniE817", "说"], ["uniE818", "生"], ["uniE819", "国"], ["uniE81A", "年"], ["uniE81B", "着"], ["uniE81C", "就"], ["uniE81D", "那"], ["uniE81E", "和"],
];

const Stroke = ({ w = 80, h = 80, children }) => <Svg w={w} h={h} vb={`0 0 ${w} ${h}`}>{children}</Svg>;
const SERIF = '"Liberation Serif", serif';
const SAMPLES = [
  { sel: 1, l: 33, r: 33, pb: 7, c: <Stroke w={31} h={54}><rect x="1" y="1" width="29" height="52" fill="none" stroke="#000" strokeWidth="1.800" /><text x="15.500" y="38" fontFamily={SERIF} fontSize="44" textAnchor="middle">?</text></Stroke> },
  { l: 0, r: 0, c: <HighLogic>HIGH<br />LOGIC</HighLogic> },
  { l: 15, r: 14, pb: 19, c: <Stroke w={68} h={68}><circle cx="34" cy="34" r="34" /></Stroke> },
  { l: 26, r: 25, pb: 6, c: <Stroke w={46} h={54}><rect width="46" height="54" /></Stroke> },
  { l: 28, r: 28, pb: 4, c: <Stroke w={41} h={40}><path d="M20.500 0v40M0 20h41" stroke="#000" strokeWidth="3" /></Stroke> },
  { l: 33, r: 31, pb: 28, c: <Stroke w={33} h={27}><path d="M1 27 16.500 2 32 27" fill="none" stroke="#000" strokeWidth="2.400" /></Stroke> },
  { l: 28, r: 28, pt: 8, c: <Stroke w={40} h={13}><path d="M1 11c4-10 12-9 19-5s14 5 19-4" fill="none" stroke="#000" strokeWidth="2.200" /></Stroke> },
  { l: 48, r: 46, pt: 11, c: <Stroke w={3} h={70}><rect width="3" height="70" /></Stroke> },
  { l: 22, r: 21, pb: 3, c: <Stroke w={54} h={54}><circle cx="27" cy="27" r="26" fill="none" stroke="#000" strokeWidth="1.800" /><text x="27" y="43" fontFamily={SERIF} fontSize="47" fontWeight="400" textAnchor="middle">R</text></Stroke> },
  { l: 21, r: 21, pb: 9, c: <Stroke w={56} h={56}><circle cx="28" cy="28" r="27" fill="none" stroke="#000" strokeWidth="1.800" /><text x="28" y="45" fontFamily={SERIF} fontSize="50" textAnchor="middle">C</text></Stroke> },
  { l: 9, r: 9, pt: 12, c: <Stroke w={78} h={4}><rect width="78" height="3.500" /></Stroke> },
  { l: 16, r: 14, pb: 20, c: <Stroke w={68} h={68}><circle cx="34" cy="34" r="30.500" fill="none" stroke="#000" strokeWidth="6.500" /></Stroke> },
  { l: 16, r: 17, c: null }, { l: 17, r: 17, c: null },
];

const Pin = ({ c = "#111" }) => <svg width="10" height="12" viewBox="0 0 10 12" style={{ display: "block" }}><path d="M2.500 1h5v6h-5zM1 7.500h8M5 8v4M6 1v6" fill="none" stroke={c} strokeWidth="1.300" /></svg>;
const Cross = ({ c = "#111", s = 10, sw = 1.700 }) => <svg width={s} height={s} viewBox="0 0 10 10" style={{ display: "block" }}><path d="M1 1l8 8M9 1 1 9" stroke={c} strokeWidth={sw} /></svg>;
const Wand = () => (
  <svg width="25" height="23" viewBox="0 0 25 23" style={{ display: "block" }}><path d="M8 2l3-2 13 12-3 3z" fill="#777" /><path d="M8 1l3-1 3 3-3 2z" fill="#ddd" />
    <path d="M5 8l1 2 2 .3-1.500 1.500.4 2L5 13l-2 .800.4-2L2 10.300 4 10zM14 10l.8 1.500 1.700.2-1.200 1.200.3 1.600-1.600-.8-1.500.8.300-1.600-1.200-1.200 1.700-.2zM6 16l1 2 2 .3-1.500 1.500.4 2L6 21l-2 .8.400-2L3 18.300 5 18z" fill={Y} /></svg>
);
const UniWrap = styled.div`margin-left: 6px; flex: none;`;
const Unicode = () => (
  <UniWrap><svg width="26" height="25" viewBox="0 0 26 25" style={{ display: "block" }}><rect width="26" height="25" fill="#fff" /><rect x="1" y="0" width="24" height="18" fill="#e0122e" /><path d="M5 0v11a3 3 0 0 0 6 0V0" fill="none" stroke="#fff" strokeWidth="2.200" /><path d="M15 18V1l7 17V0" fill="none" stroke="#fff" strokeWidth="2" />
    <text x="13" y="24" fontSize="5.500" fontWeight="700" textAnchor="middle" fontFamily='"Liberation Sans", sans-serif' fill="#222">UNICODE</text></svg></UniWrap>
);

export default function App() {
  return (
    <App_>
      <Global />
      <TitleBar>
        <Svg w={19} h={21} vb="0 0 18 20"><rect x="0" y="1" width="14" height="17" fill="#2a5caa" /><text x="7" y="15" fontSize="14" fontWeight="700" fill="#fff" textAnchor="middle" fontFamily='"Liberation Sans", sans-serif'>F</text><path d="M16 8l2 2-6 9-3 1 1-3z" fill="#e8b040" /></Svg>
        <TitleText>FontCreator 14.0 (UNREGISTERED) - [font.ttf - fonteditor Medium]</TitleText>
        <WinBtn><svg width="10" height="2"><rect width="10" height="1" fill="#111" /></svg></WinBtn>
        <WinBtn><svg width="12" height="12" viewBox="0 0 12 12"><rect x="1" y="3" width="8" height="8" fill="none" stroke="#111" /><path d="M3 3V1h8v8H9" fill="none" stroke="#111" /></svg></WinBtn>
        <WinBtn><Cross s={11} sw={1} /></WinBtn>
      </TitleBar>
      <MenuBar>
        {[["File", 46], ["Edit", 49], ["View", 56], ["Insert", 62], ["Font", 54], ["Tools", 61], ["Buy", 47], ["Help", 50]].map(([t, w]) => <MenuItem key={t} $w={w}>{t}</MenuItem>)}
      </MenuBar>
      <Tools items={ROW1} />
      <Tools items={ROW2} />
      <Tools items={ROW3} />
      <TabBar>
        <DocTab>
          <TabShape width="116" height="33" viewBox="0 0 116 33"><path d="M0 32.500C6 30 9 8 13 3c1-2 3-2.500 5-2.500h80c2 0 3 1 4 3l6 23c1 3 4 5.500 8 5.500" fill="#f5f5f5" stroke="#6f8fb2" /></TabShape>
          <TabLabel>font.ttf</TabLabel>
          <TabLabel><Cross c="#777" s={9} sw={1} /></TabLabel>
        </DocTab>
      </TabBar>
      <Workspace>
        <Panel $w={269}>
          <PanelHead><span>Samples</span><Grip /><HeadBtn><Pin /></HeadBtn><HeadBtn><Cross /></HeadBtn></PanelHead>
          <SamplesBody>
            <SampleGrid>
              {SAMPLES.map((s, i) => <SampleCell key={i} $sel={s.sel} $l={s.l} $r={s.r} $pb={s.pb} $pt={s.pt}>{s.c}</SampleCell>)}
            </SampleGrid>
            <SampleSpacer />
            <VScroll $w={20}><ScrollArrow><Chev up /></ScrollArrow><Thumb $h={21} /><Fill /><ScrollArrow><Chev /></ScrollArrow></VScroll>
          </SamplesBody>
        </Panel>
        <Column $w={1236}>
          <Panel $w={1236} $h={545}>
            <PanelHead $on><span>font.ttf</span><Grip $on $r={4} /><HeadBtn><Cross c="#fff" /></HeadBtn></PanelHead>
            <MainBody>
              <TreeView />
              <VScroll $w={20}><ScrollArrow><Chev up /></ScrollArrow><Thumb $h={267} /><Fill /><ScrollArrow><Chev /></ScrollArrow></VScroll>
              <Splitter><SplitGrip $t={240} $h={36} /></Splitter>
              <GridPane>
                <Caption>Glyphs, 101 items</Caption>
                <GlyphGrid>
                  {ROWS.map(([n, g], i) => (
                    <GlyphCell key={n}>
                      <GlyphHead $sel={i === 0}>{n}</GlyphHead>
                      <GlyphBody $sel={i === 0}>{g}</GlyphBody>
                    </GlyphCell>
                  ))}
                </GlyphGrid>
              </GridPane>
              <VScroll $w={20}><ScrollArrow><Chev up /></ScrollArrow><Thumb $h={132} /><Fill /><ScrollArrow><Chev /></ScrollArrow></VScroll>
            </MainBody>
          </Panel>
          <Panel $w={1236}>
            <PanelHead><span>Preview</span><Grip /><HeadBtn><Pin /></HeadBtn><HeadBtn><Cross /></HeadBtn></PanelHead>
            <PreviewBar>
              <Combo $w={130}>Auto<Chev /></Combo>
              <Combo $w={130} $ml={8}>Auto<Chev /></Combo>
              <Combo $w={129} $ml={7}>Custom<Chev /></Combo>
              <Spin $w={61} $ml={6}>0<SpinArrows><Chev up c="#222" /><Chev c="#222" /></SpinArrows></Spin>
              <Spin $w={71} $ml={12}>32<SpinArrows><Chev up c="#222" /><Chev c="#222" /></SpinArrows></Spin>
              <ToggleBtn $w={29} $ml={8}><u>U</u></ToggleBtn>
              <ToggleBtn $w={28} $ml={5}><s>S</s></ToggleBtn>
              <ToggleBtn $w={45} $ml={8}><Svg s={24}>{IC.check}</Svg></ToggleBtn>
              <Combo $w={541} $ml={8} $white>High-Logic<Chev /></Combo>
            </PreviewBar>
            <PreviewBody>
              <LayerList><CheckBox /><span>_shaper</span></LayerList>
              <Splitter $w={7}><SplitGrip $t={40} $h={46} /></Splitter>
              <PreviewMain>
                <PreviewCanvas><PreviewScroll><Chev up c="#999" /><Chev c="#999" /></PreviewScroll></PreviewCanvas>
                <TextInput $bg="#f0f0f0">/.notdef/.notdef/.notdef/.notdef/.notdef/.notdef/.notdef/.notdef/.notdef/.notdef</TextInput>
              </PreviewMain>
            </PreviewBody>
          </Panel>
        </Column>
        <Column $w={391}>
          <Panel $w={391} $h={456}>
            <PanelHead><span>Glyph Properties (#0 .notdef)</span><Grip /><HeadBtn><Pin /></HeadBtn><HeadBtn><Cross /></HeadBtn></PanelHead>
            <PropsBody>
              <PropsForm>
                <PropRow><PropLabel>Name</PropLabel><TextInput $w={226}>.notdef</TextInput><WandBtn><Wand /></WandBtn></PropRow>
                <PropRow><PropLabel>Code-points</PropLabel><TextInput $w={192} /><Unicode /><WandBtn $ml={8}><Wand /></WandBtn></PropRow>
                <PropRow>.notdef -</PropRow>
                <PropRow><PropLabel>OT Class</PropLabel><Combo $w={113}>Automatic<Chev /></Combo><Short $ml={77}>Base</Short></PropRow>
                <PropRow><PropLabel><Short>LSB</Short>0</PropLabel><TextInput $w={260}>0</TextInput></PropRow>
                <PropRow><PropLabel><Short>RSB</Short>28</PropLabel><TextInput $w={260}>28</TextInput></PropRow>
                <PropRow><PropLabel><Short>AW</Short>28</PropLabel><TextInput $w={260}>28</TextInput></PropRow>
                <PropRow><PropLabel>Tag</PropLabel><Combo $w={127}>No Glyph Tag<Chev /></Combo><Combo $w={128} $ml={5}>No Layer Tag<Chev /></Combo></PropRow>
                <PropRow $top $h={140} $mt={4}><PropLabel $top>Note</PropLabel><NoteBox><NoteScroll><Chev up c="#999" /><Chev c="#999" /></NoteScroll></NoteBox></PropRow>
              </PropsForm>
              <VScroll $w={20} $bg="#c8c8c8"><ScrollArrow $bg="#f0f0f0"><Chev up /></ScrollArrow><Fill /><ScrollArrow $bg="#f0f0f0"><Chev /></ScrollArrow></VScroll>
            </PropsBody>
          </Panel>
          <Panel $w={391}>
            <PanelHead><span>Transform</span><Grip /><HeadBtn><Pin /></HeadBtn><HeadBtn><Cross /></HeadBtn></PanelHead>
            <TabsWrap>
              <TabLine>
                <PageTab $w={95} $first $pr={4}>Scale</PageTab><PageTab $w={102}>Mirror</PageTab><PageTab $w={94} $pr={14}>Size</PageTab><PageTab $w={94}>Skew</PageTab>
              </TabLine>
              <TabLine $ml={-2}>
                <PageTab $w={124} $first $on>Position</PageTab><PageTab $w={140}>Movement</PageTab><PageTab $w={123}>Rotation</PageTab>
              </TabLine>
            </TabsWrap>
            <TransformBody>
              <TTop>
                <TRow><TLabel>X position</TLabel><Spin $w={80} $pale>0<SpinArrows><Chev up /><Chev /></SpinArrows></Spin></TRow>
                <TRow><TLabel>Y position</TLabel><Spin $w={80} $pale>0<SpinArrows><Chev up /><Chev /></SpinArrows></Spin></TRow>
                <RadioGrid>{[0, 1, 2, 3, 4, 5, 6, 7, 8].map(i => <Radio key={i} $on={i === 6} />)}</RadioGrid>
              </TTop>
              <CurveRow><CheckBox $s={15} $c="#ccc" $mt={0} />On curve</CurveRow>
              <ApplyBtn>Apply</ApplyBtn>
            </TransformBody>
          </Panel>
        </Column>
      </Workspace>
      <StatusBar>
        <StatusCell $w={643} $pl={7}>Glyph #18 - Simple - uniE811</StatusCell>
        <StatusCell $w={1099} $pl={11} $div>1 item selected</StatusCell>
        <StatusCell $grow $div $right>101 glyphs</StatusCell>
      </StatusBar>
      <Tooltip>{"uniE811\nPrivate Use Area\n\nIndex: 18\nCode-point(s): $E811"}</Tooltip>
    </App_>
  );
}
